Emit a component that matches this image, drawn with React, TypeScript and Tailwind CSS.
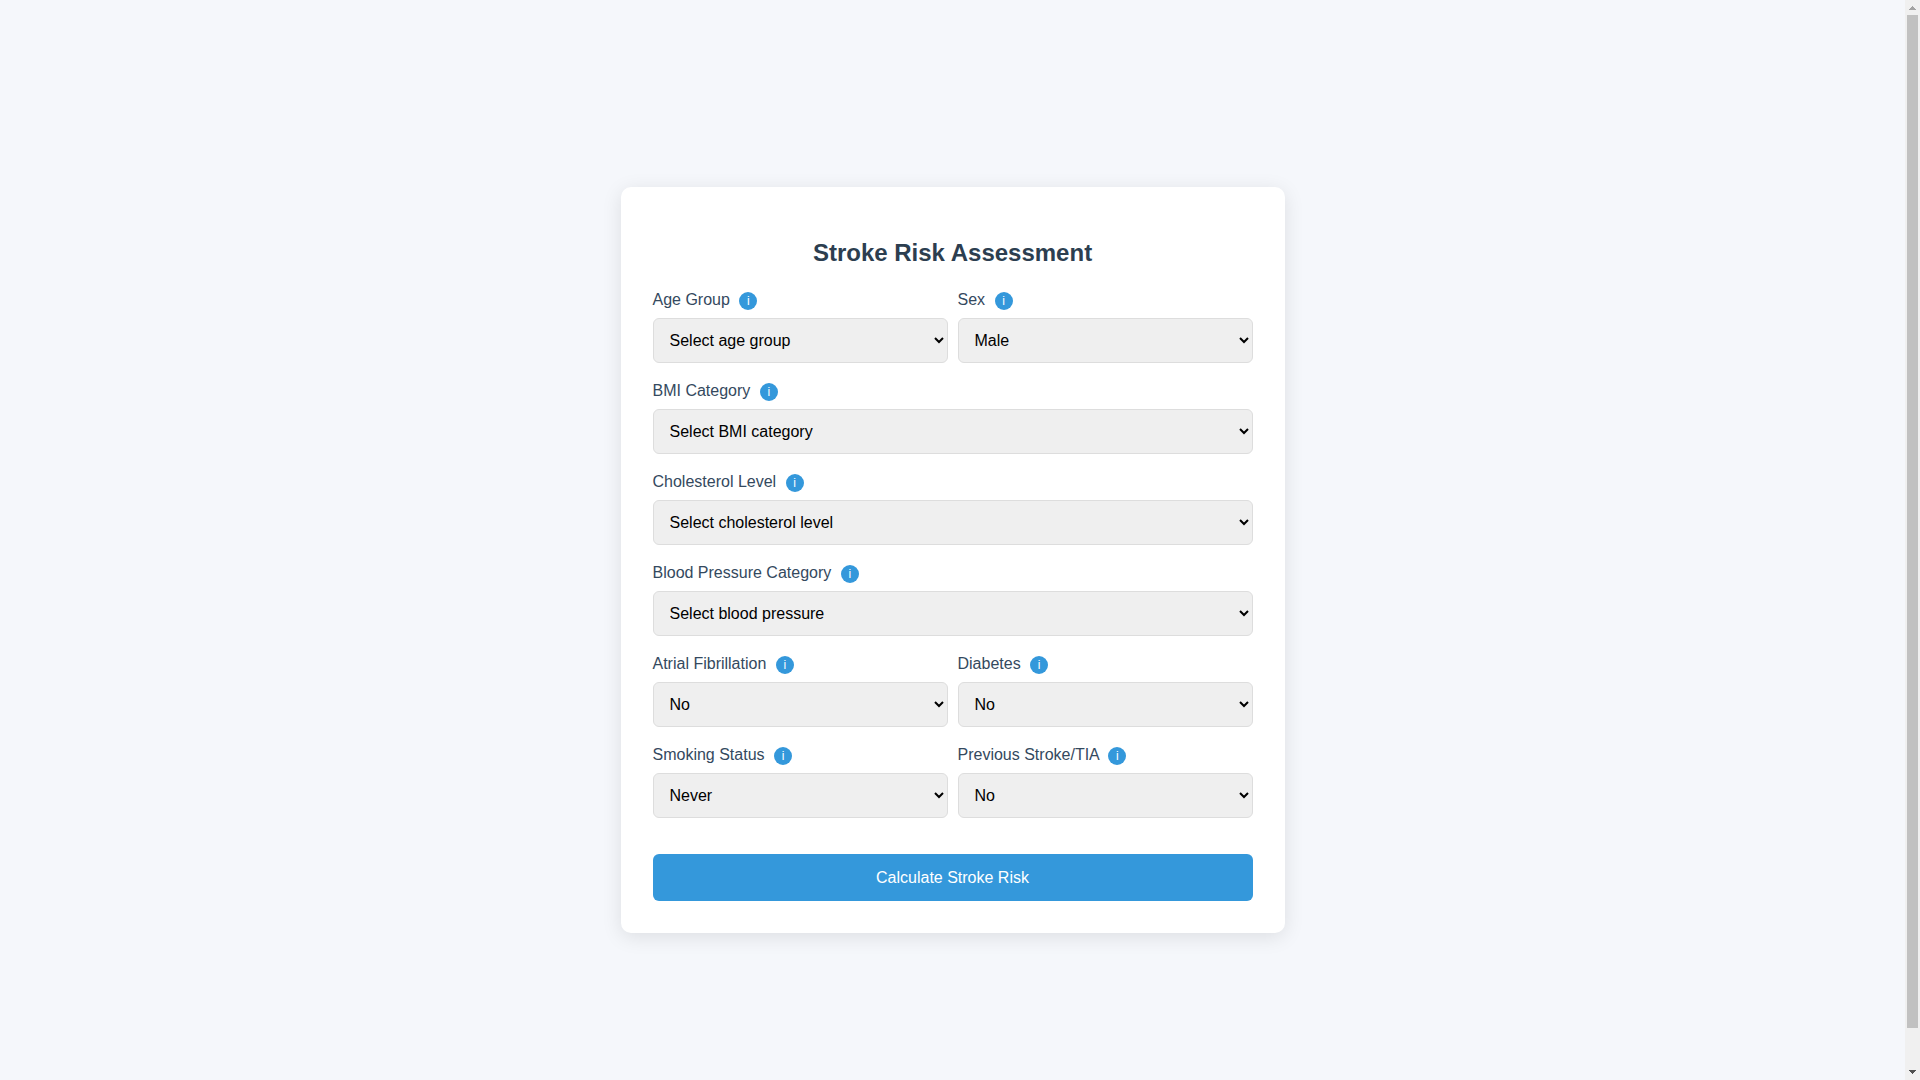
import React from 'react';

interface FieldProps {
  id: string;
  label: string;
  hint: string;
  options: string[];
  wide?: boolean;
}

const fields: FieldProps[] = [
  {
    id: 'age',
    label: 'Age Group',
    hint: 'Stroke risk increases with age',
    options: ['Select age group', 'Under 45', '45-54', '55-64', '65-74', '75+'],
  },
  {
    id: 'sex',
    label: 'Sex',
    hint: 'Biological sex',
    options: ['Male', 'Female'],
  },
  {
    id: 'bmi',
    label: 'BMI Category',
    hint: 'Body mass index',
    options: ['Select BMI category', 'Underweight', 'Normal', 'Overweight', 'Obese'],
    wide: true,
  },
  {
    id: 'cholesterol',
    label: 'Cholesterol Level',
    hint: 'Total cholesterol',
    options: ['Select cholesterol level', 'Normal', 'Borderline', 'High'],
    wide: true,
  },
  {
    id: 'bp',
    label: 'Blood Pressure Category',
    hint: 'Latest blood pressure reading',
    options: ['Select blood pressure', 'Normal', 'Elevated', 'Stage 1', 'Stage 2'],
    wide: true,
  },
  {
    id: 'afib',
    label: 'Atrial Fibrillation',
    hint: 'Irregular heart rhythm',
    options: ['No', 'Yes'],
  },
  {
    id: 'diabetes',
    label: 'Diabetes',
    hint: 'Diagnosed diabetes',
    options: ['No', 'Yes'],
  },
  {
    id: 'smoking',
    label: 'Smoking Status',
    hint: 'Tobacco use',
    options: ['Never', 'Former', 'Current'],
  },
  {
    id: 'previous',
    label: 'Previous Stroke/TIA',
    hint: 'Any earlier stroke or mini-stroke',
    options: ['No', 'Yes'],
  },
];

const Field: React.FC<FieldProps> = ({ id, label, hint, options, wide }) => (
  <div className={wide ? 'col-span-2' : ''}>
    <label htmlFor={id} className="mb-1 block leading-7 text-[#34495e]">
      {label}{' '}
      <span
        title={hint}
        className="ml-[5px] inline-block size-[18px] cursor-help rounded-full bg-[#3498db] text-center align-middle text-xs leading-[18px] text-white"
      >
        i
      </span>
    </label>
    <select
      id={id}
      className="block h-[45px] w-full rounded-md border border-[#dddddd] bg-[#efefef] p-3 text-base text-black"
    >
      {options.map((option) => (
        <option key={option}>{option}</option>
      ))}
    </select>
  </div>
);

const Scrollbar: React.FC = () => (
  <div aria-hidden="true" className="flex w-[15px] shrink-0 flex-col items-center bg-[#f0f0f0]">
    <svg viewBox="0 0 15 15" className="size-[15px] shrink-0" shapeRendering="crispEdges">
      <path d="M7 6h1v1h1v1h1v1h1v1H4V9h1V8h1V7h1z" fill="#a3a3a3" />
    </svg>
    <div className="mb-[37px] w-[11px] flex-1 bg-[#c1c1c1]" />
    <svg viewBox="0 0 15 15" className="size-[15px] shrink-0" shapeRendering="crispEdges">
      <path d="M4 5h7v1h-1v1H9v1H8v1H7V8H6V7H5V6H4z" fill="#505050" />
    </svg>
  </div>
);

export default function App() {
  return (
    <div className="flex h-screen bg-[#f5f7fb] font-['Liberation_Sans',Arial,sans-serif] text-base">
      <main className="flex-1 overflow-y-auto [scrollbar-width:none]">
        <div className="box-content flex min-h-screen items-center justify-center py-5">
          <div className="w-full max-w-[664px] rounded-[10px] bg-white p-8 shadow-[0_4px_20px_rgba(0,0,0,0.1)]">
            <h2 className="my-5 text-center text-2xl leading-[27px] font-bold text-[#2c3e50]">
              Stroke Risk Assessment
            </h2>
            <form onSubmit={(e) => e.preventDefault()}>
              <div className="grid grid-cols-2 gap-x-[10px] gap-y-[14px]">
                {fields.map((field) => (
                  <Field key={field.id} {...field} />
                ))}
              </div>
              <button
                type="submit"
                className="mt-9 block h-[47px] w-full cursor-pointer rounded-md bg-[#3498db] text-base text-white hover:bg-[#2980b9]"
              >
                Calculate Stroke Risk
              </button>
            </form>
          </div>
        </div>
      </main>
      <Scrollbar />
    </div>
  );
}
